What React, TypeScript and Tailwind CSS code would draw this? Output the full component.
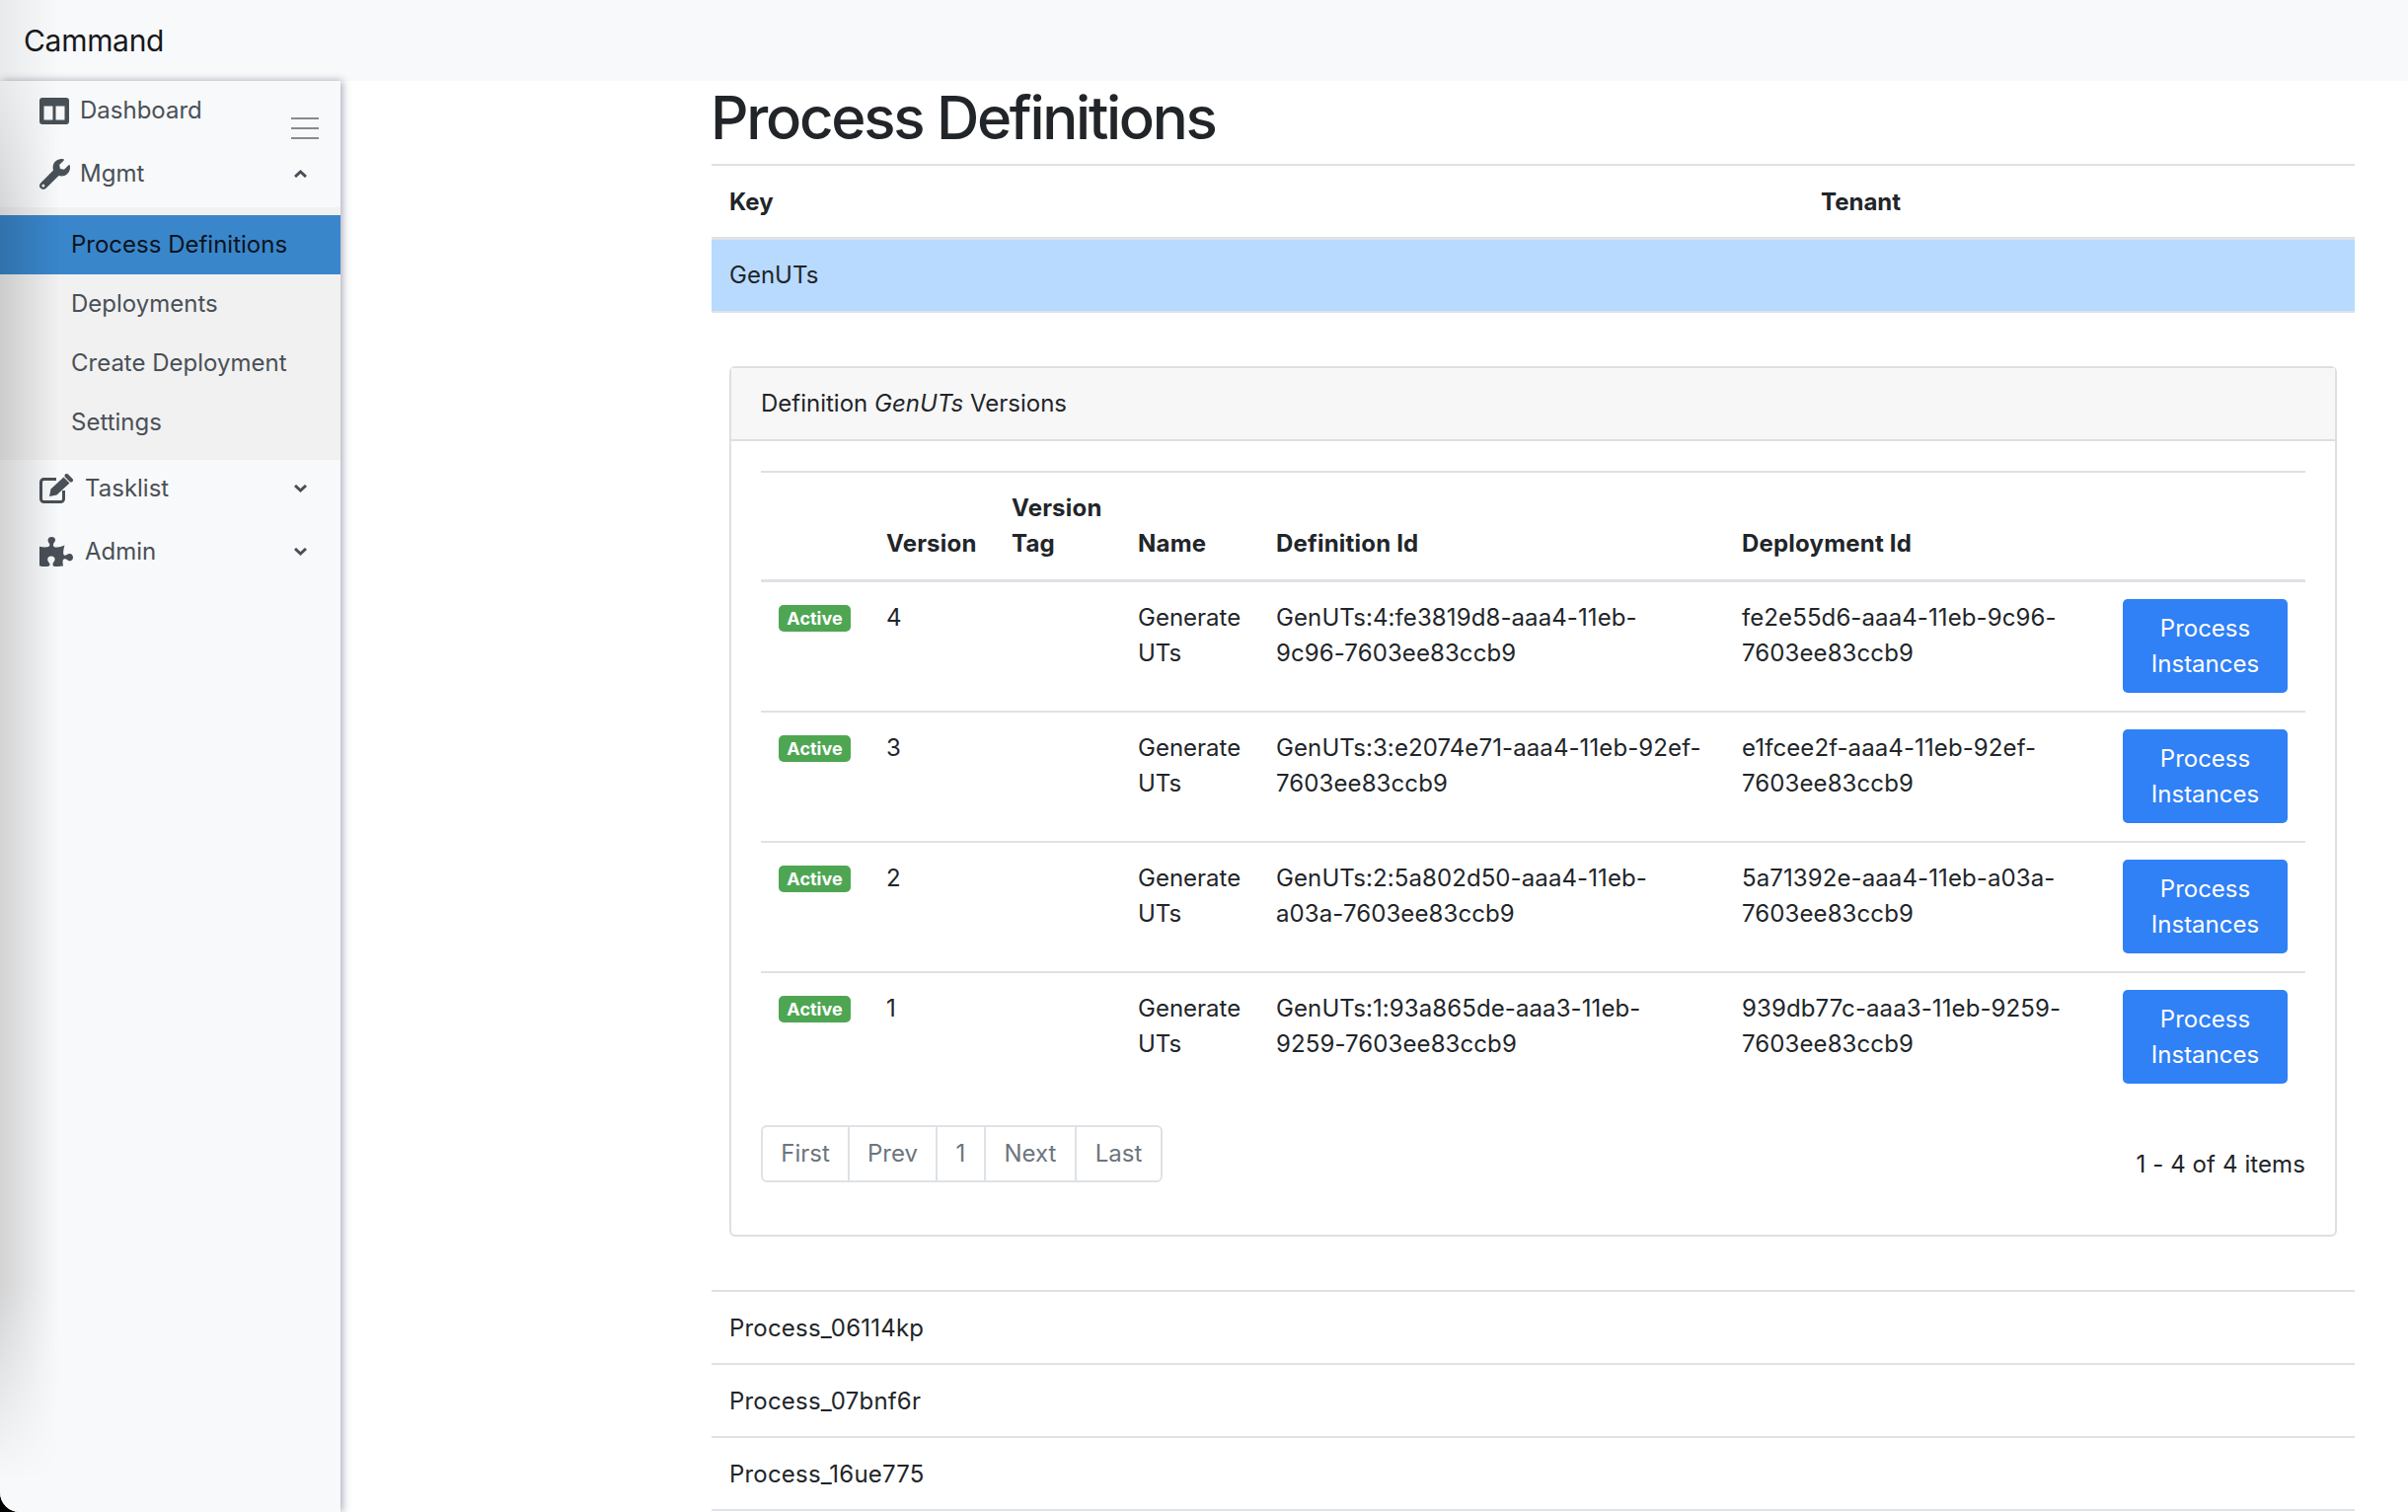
import { FaWrench, FaPuzzlePiece } from 'react-icons/fa';

const versions = [
  { version: 4, defId: 'GenUTs:4:fe3819d8-aaa4-11eb-9c96-7603ee83ccb9', deployId: 'fe2e55d6-aaa4-11eb-9c96-7603ee83ccb9' },
  { version: 3, defId: 'GenUTs:3:e2074e71-aaa4-11eb-92ef-7603ee83ccb9', deployId: 'e1fcee2f-aaa4-11eb-92ef-7603ee83ccb9' },
  { version: 2, defId: 'GenUTs:2:5a802d50-aaa4-11eb-a03a-7603ee83ccb9', deployId: '5a71392e-aaa4-11eb-a03a-7603ee83ccb9' },
  { version: 1, defId: 'GenUTs:1:93a865de-aaa3-11eb-9259-7603ee83ccb9', deployId: '939db77c-aaa3-11eb-9259-7603ee83ccb9' },
];

const subItems = ['Process Definitions', 'Deployments', 'Create Deployment', 'Settings'];
const otherKeys = ['Process_06114kp', 'Process_07bnf6r', 'Process_16ue775'];
const pages = [
  { label: 'First', className: 'flex w-[86px] items-center justify-center' },
  { label: 'Prev', className: 'flex w-[89px] items-center justify-center border-l-2 border-[#dee2e6]' },
  { label: '1', className: 'flex w-[49px] items-center justify-center border-l-2 border-[#dee2e6]' },
  { label: 'Next', className: 'flex w-[92px] items-center justify-center border-l-2 border-[#dee2e6]' },
  { label: 'Last', className: 'flex w-[87px] items-center justify-center border-l-2 border-[#dee2e6]' },
];

function ColumnsIcon() {
  return (
    <svg viewBox="0 0 30 27" className="h-[27px] w-[30px]" fill="currentColor">
      <path
        fillRule="evenodd"
        d="M3 0H27A3 3 0 0 1 30 3V24A3 3 0 0 1 27 27H3A3 3 0 0 1 0 24V3A3 3 0 0 1 3 0ZM4.500 8.500V22.500H13.500V8.500ZM16.500 8.500V22.500H25.500V8.500Z"
      />
    </svg>
  );
}

function EditIcon() {
  return (
    <svg viewBox="0 0 34 30" className="h-[30px] w-[34px]" fill="currentColor">
      <path d="M17 5.500H4.500A3 3 0 0 0 1.500 8.500V25.500A3 3 0 0 0 4.500 28.500H21.500A3 3 0 0 0 24.500 25.500V17" fill="none" stroke="currentColor" strokeWidth="3" />
      <path d="M10 23L11.500 15.500L24.500 3.500L30.500 9.500L17.500 21.500Z" />
      <path d="M27.500 2L32 6.500" stroke="currentColor" strokeWidth="4" strokeLinecap="round" />
    </svg>
  );
}

function Chevron({ up }: { up?: boolean }) {
  return (
    <svg viewBox="0 0 13 8" className="h-[8px] w-[13px]" fill="none" stroke="currentColor" strokeWidth="3">
      <polyline points={up ? '1,7 6.500,2 12,7' : '1,1 6.500,6 12,1'} />
    </svg>
  );
}

function Sidebar() {
  return (
    <aside className="relative z-10 w-[345px] shrink-0 bg-[#f8f9fa] text-[#495057] shadow-[2px_0_8px_rgba(60,65,95,0.45)]">
      {/* hamburger toggle */}
      <div className="absolute left-[295px] top-[37px] flex w-[28px] flex-col gap-[8px]">
        <div className="h-[2px] bg-[#8a8a8a]" />
        <div className="h-[2px] bg-[#8a8a8a]" />
        <div className="h-[2px] bg-[#8a8a8a]" />
      </div>

      <div className="flex h-[62px] items-center pb-[2px] pl-[40px]">
        <ColumnsIcon />
        <span className="ml-[11px]">Dashboard</span>
      </div>
      <div className="flex h-[66px] items-center justify-between pb-[2px] pl-[40px] pr-[34px]">
        <div className="flex items-center">
          <FaWrench className="h-[31px] w-[31px]" />
          <span className="ml-[10px]">Mgmt</span>
        </div>
        <Chevron up />
      </div>

      <div className="bg-[#f1f1f1] py-[8px]">
        {subItems.map((label, i) => (
          <div
            key={label}
            className={
              i === 0
                ? 'flex h-[60px] items-center bg-[#3a86cb] pl-[72px] text-[#0a1420]'
                : 'flex h-[60px] items-center pl-[72px]'
            }
          >
            {label}
          </div>
        ))}
      </div>

      <div className="flex h-[65px] items-center justify-between pb-[8px] pl-[40px] pr-[34px]">
        <div className="flex items-center">
          <EditIcon />
          <span className="ml-[12px]">Tasklist</span>
        </div>
        <Chevron />
      </div>
      <div className="flex h-[65px] items-center justify-between pb-[10px] pl-[40px] pr-[34px]">
        <div className="flex items-center">
          <FaPuzzlePiece className="h-[32px] w-[34px]" />
          <span className="ml-[12px]">Admin</span>
        </div>
        <Chevron />
      </div>
    </aside>
  );
}

function VersionsCard() {
  return (
    <div className="rounded-[6px] border-2 border-[#dfdfdf]">
      <div className="border-b-2 border-[#dfdfdf] bg-[#f7f7f7] px-[30px] py-[18px]">
        Definition <em>GenUTs</em> Versions
      </div>
      <div className="p-[30px]">
        <table className="w-full table-fixed border-collapse">
          <colgroup>
            <col className="w-[109px]" />
            <col className="w-[127px]" />
            <col className="w-[128px]" />
            <col className="w-[140px]" />
            <col className="w-[472px]" />
            <col className="w-[386px]" />
            <col />
          </colgroup>
          <thead>
            <tr className="border-t-2 border-b-[3px] border-[#dee2e6] text-left align-bottom tracking-[0.2px]">
              <th className="p-[18px]" />
              <th className="p-[18px] font-bold">Version</th>
              <th className="p-[18px] font-bold">Version Tag</th>
              <th className="p-[18px] font-bold">Name</th>
              <th className="p-[18px] font-bold">Definition Id</th>
              <th className="p-[18px] font-bold">Deployment Id</th>
              <th className="p-[18px]" />
            </tr>
          </thead>
          <tbody>
            {versions.map((v) => (
              <tr key={v.version} className="border-b-2 border-[#dee2e6] align-top last:border-b-0">
                <td className="p-[18px]">
                  <span className="mt-[5px] block h-[27px] w-[73px] rounded-[5px] bg-[#4ea653] text-center text-[18px] font-bold leading-[27px] text-white">
                    Active
                  </span>
                </td>
                <td className="p-[18px]">{v.version}</td>
                <td className="p-[18px]" />
                <td className="p-[18px]">Generate UTs</td>
                <td className="py-[18px] pl-[18px] pr-[22px] tracking-[0.1px]">{v.defId}</td>
                <td className="p-[18px] tracking-[0.1px]">{v.deployId}</td>
                <td className="p-[18px]">
                  <button className="-mt-[1px] block w-[167px] rounded-[5px] bg-[#3080f6] px-[18px] pb-[11px] pt-[12px] text-center text-white">
                    Process Instances
                  </button>
                </td>
              </tr>
            ))}
          </tbody>
        </table>

        <div className="mt-[24px] flex items-end justify-between">
          <div className="mb-[23px] flex h-[58px] rounded-[6px] border-2 border-[#dee2e6] text-[#6c757d]">
            {pages.map((p) => (
              <div key={p.label} className={p.className}>
                {p.label}
              </div>
            ))}
          </div>
          <div className="mb-[23px] tracking-[0.1px]">1 - 4 of 4 items</div>
        </div>
      </div>
    </div>
  );
}

export default function App() {
  return (
    <div className="h-[1532px] w-[2440px] overflow-hidden bg-black font-['Inter',sans-serif] text-[24px] leading-[36px] text-[#212529]">
      <div className="relative flex h-full flex-col overflow-hidden rounded-bl-[20px] bg-white">
        <header className="flex h-[82px] shrink-0 items-center bg-[#f8f9fa] pl-[24px] text-[30px] tracking-[-0.3px] text-[#16181b]">Cammand</header>

        <div className="flex min-h-0 flex-1">
          <Sidebar />
          <main className="min-w-0 flex-1 pl-[376px] pr-[54px]">
            <h1 className="-ml-[1px] mb-[11px] pt-[1px] text-[60px] font-medium leading-[72px] tracking-[-2.3px]">Process Definitions</h1>

            <div className="grid grid-cols-[1106px_1fr] border-t-2 border-b-[3px] border-[#dee2e6] font-bold">
              <div className="pb-[17px] pl-[18px] pt-[19px]">Key</div>
              <div className="pb-[17px] pl-[18px] pt-[19px]">Tenant</div>
            </div>
            <div className="border-b-2 border-[#dee2e6] bg-[#b8daff] p-[18px]">GenUTs</div>

            <div className="px-[18px] pb-[54px] pt-[54px]">
              <VersionsCard />
            </div>

            {otherKeys.map((k) => (
              <div key={k} className="border-t-2 border-[#dee2e6] pb-[17px] pl-[18px] pt-[19px] tracking-[0.2px]">
                {k}
              </div>
            ))}
            <div className="border-t-2 border-[#dee2e6]" />
          </main>
        </div>

        {/* soft shade down the left edge of the window */}
        <div className="pointer-events-none absolute bottom-0 left-0 top-0 z-20 w-[60px] bg-gradient-to-r from-black/15 to-transparent [mask-image:linear-gradient(to_bottom,rgba(0,0,0,0.4)_5%,black_15%,black_85%,transparent_98%)]" />
      </div>
    </div>
  );
}
